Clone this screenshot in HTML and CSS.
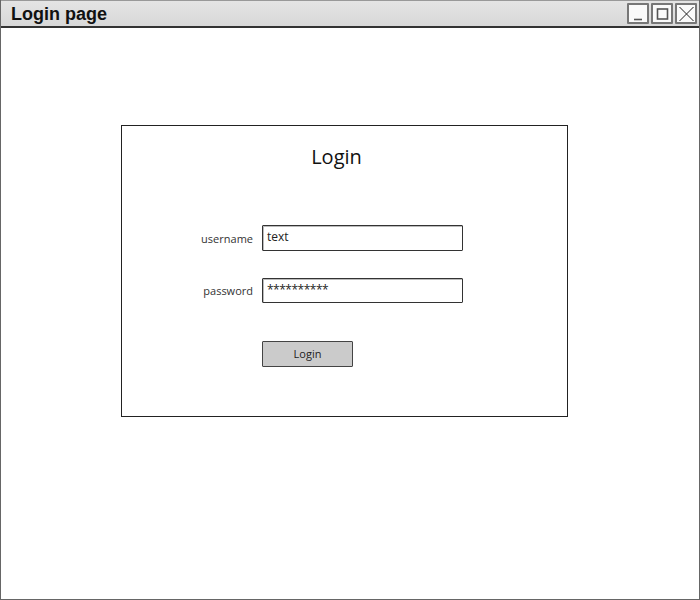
FILE: index.html
```html
<!DOCTYPE html>
<html>
<head>
<meta charset="utf-8">
<title>Login page</title>
<link rel="stylesheet" href="styles.css">
</head>
<body>
<div class="window">
  <div class="titlebar">
    <span class="title">Login page</span>
    <div class="controls">
      <span class="ctl"><svg width="17" height="16" viewBox="0 0 17 16"><path d="M4 13.5H12" stroke="#555" stroke-width="1.6"/></svg></span>
      <span class="ctl"><svg width="17" height="16" viewBox="0 0 17 16"><rect x="3.5" y="3" width="10" height="10" fill="none" stroke="#555" stroke-width="1.6"/></svg></span>
      <span class="ctl"><svg width="17" height="16" viewBox="0 0 17 16"><path d="M1.5 1L15.5 15M15.5 1L1.5 15" stroke="#222" stroke-width="1"/></svg></span>
    </div>
  </div>
  <div class="content">
    <div class="card">
      <div class="card-title">Login</div>
      <div class="form">
        <label class="label">username</label>
        <div class="field">text</div>
        <label class="label">password</label>
        <div class="field pw">**********</div>
        <span></span>
        <div class="btn">Login</div>
      </div>
    </div>
  </div>
</div>
</body>
</html>
```
FILE: styles.css
```css
html, body {
  margin: 0;
  padding: 0;
  background: #fff;
}
.window {
  width: 700px;
  height: 600px;
  box-sizing: border-box;
  border: 1px solid #666;
  border-top: none;
  display: flex;
  flex-direction: column;
  font-family: "Open Sans", "DejaVu Sans", sans-serif;
  color: #222;
}
.titlebar {
  flex: none;
  background: linear-gradient(#e4e4e4, #d8d8d8);
  border-top: 1px solid #999;
  border-bottom: 2px solid #333;
  box-sizing: border-box;
  height: 28px;
  display: flex;
  align-items: center;
  justify-content: space-between;
  padding-left: 10px;
  padding-right: 2px;
}
.title {
  font-family: "Liberation Sans", "DejaVu Sans", sans-serif;
  font-weight: bold;
  font-size: 18px;
  color: #111;
  margin-top: 2px;
}
.controls {
  display: flex;
  gap: 2px;
  align-items: center;
}
.ctl {
  width: 22px;
  height: 21px;
  box-sizing: border-box;
  border: 2px solid #777;
  border-radius: 1px;
  background: #fafafa;
  display: flex;
  align-items: center;
  justify-content: center;
}
.ctl svg { display: block; }
.content {
  flex: 1;
  padding-top: 97px;
  padding-left: 120px;
}
.card {
  width: 447px;
  height: 292px;
  box-sizing: border-box;
  border: 1px solid #222;
  display: flex;
  flex-direction: column;
}
.card-title {
  text-align: center;
  font-size: 20px;
  line-height: 30px;
  margin-top: 16px;
  margin-right: 16px;
  color: #111;
}
.form {
  display: grid;
  grid-template-columns: 131px 201px;
  column-gap: 9px;
  row-gap: 27px;
  margin-top: 53px;
  align-items: center;
}
.label {
  text-align: right;
  font-size: 11px;
  color: #333;
}
.field {
  height: 26px;
  box-sizing: border-box;
  border: 1px solid #333;
  border-radius: 1px;
  box-shadow: inset 1px 1px 0 #bbb;
  font-size: 12px;
  line-height: 22px;
  padding-left: 4px;
  color: #222;
}
.field.pw {
  letter-spacing: -0.5px;
  height: 25px;
}
.btn {
  margin-top: 11px;
  width: 91px;
  height: 26px;
  box-sizing: border-box;
  border: 1px solid #444;
  border-radius: 1px;
  background: #cbcbcb;
  font-size: 11px;
  line-height: 24px;
  text-align: center;
  color: #222;
}
```
